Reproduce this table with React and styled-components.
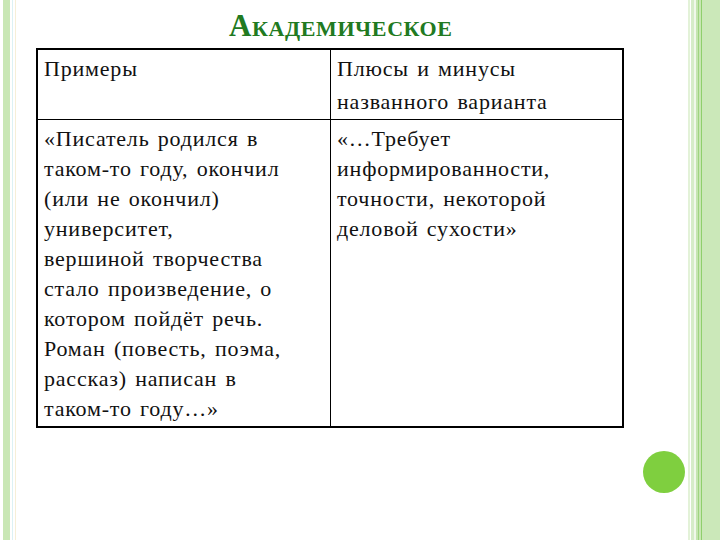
import React from "react";
import styled, { createGlobalStyle } from "styled-components";

const GlobalStyle = createGlobalStyle`
    html, body {
        margin: 0;
        padding: 0;
        background: #ffffff;
        font-family: "Times New Roman", "Liberation Serif", serif;
    }
`;

const Slide = styled.div`
    width: 720px;
    height: 540px;
    display: flex;
    background: #ffffff;
    overflow: hidden;
`;

const Border = styled.div`
    display: flex;
    height: 100%;
    flex-shrink: 0;
`;

const Stripe = styled.div`
    width: ${(p) => p.w}px;
    background: ${(p) => p.color};
`;

const Main = styled.div`
    flex: 1;
    display: flex;
    flex-direction: column;
`;

const Title = styled.h1`
    margin: 0;
    height: 48px;
    padding-left: 213px;
    box-sizing: border-box;
    display: flex;
    align-items: flex-end;
    padding-bottom: 7px;
    font-family: "Liberation Serif", "Times New Roman", serif;
    font-weight: bold;
    font-size: 31px;
    font-variant: small-caps;
    letter-spacing: 0.6px;
    line-height: 1;
    color: #217a21;
`;

const Grid = styled.div`
    margin-left: 20px;
    width: 588px;
    box-sizing: border-box;
    display: grid;
    grid-template-columns: 293px 1fr;
    border: 2px solid #000;
`;

const Cell = styled.div`
    border-right: ${(p) => (p.last ? "none" : "1px solid #000")};
    border-bottom: ${(p) => (p.head ? "1px solid #000" : "none")};
    padding: ${(p) => (p.head ? "2px 6px 1px 6px" : "4px 6px 2px 6px")};
`;

const Line = styled.div`
    font-family: "Times New Roman", "Liberation Serif", serif;
    font-size: 22px;
    color: #111;
    line-height: ${(p) => p.lh || 30}px;
    white-space: nowrap;
    letter-spacing: 0.8px;
    word-spacing: 2px;
`;

const Footer = styled.div`
    display: flex;
    justify-content: flex-end;
    padding: 23px 3px 0 0;
`;

const Dot = styled.div`
    width: 42px;
    height: 42px;
    border-radius: 50%;
    background: #7fcf3f;
`;

const leftStripes = [
    [3, "#ffffff"],
    [7, "#c9e7b5"],
    [2, "#ffffff"],
    [1, "#dcf1f4"],
    [2, "#ffffff"],
    [1, "#f6efd8"],
];

const rightStripes = [
    [2, "#e3f2d8"],
    [1, "#ffffff"],
    [3, "#d6ecc8"],
    [2, "#f0f8ea"],
    [2, "#c5e5b0"],
    [1, "#9fd480"],
    [2, "#c8e6b4"],
    [1, "#8fcf6c"],
    [18, "#cbe8b9"],
];

const examples = [
    "«Писатель родился в",
    "таком-то году, окончил",
    "(или не окончил)",
    "университет,",
    "вершиной творчества",
    "стало произведение, о",
    "котором пойдёт речь.",
    "Роман (повесть, поэма,",
    "рассказ) написан в",
    "таком-то году…»",
];

const verdict = [
    "«…Требует",
    "информированности,",
    "точности, некоторой",
    "деловой сухости»",
];

const App = () => {
    return (
        <>
            <GlobalStyle />
            <Slide>
                <Border>
                    {leftStripes.map(([w, c], i) => (
                        <Stripe key={i} w={w} color={c} />
                    ))}
                </Border>
                <Main>
                    <Title>Академическое</Title>
                    <Grid>
                        <Cell head>
                            <Line lh={33}>Примеры</Line>
                        </Cell>
                        <Cell head last>
                            <Line lh={33}>Плюсы и минусы</Line>
                            <Line lh={33}>названного варианта</Line>
                        </Cell>
                        <Cell>
                            {examples.map((t) => (
                                <Line key={t}>{t}</Line>
                            ))}
                        </Cell>
                        <Cell last>
                            {verdict.map((t) => (
                                <Line key={t}>{t}</Line>
                            ))}
                        </Cell>
                    </Grid>
                    <Footer>
                        <Dot />
                    </Footer>
                </Main>
                <Border>
                    {rightStripes.map(([w, c], i) => (
                        <Stripe key={i} w={w} color={c} />
                    ))}
                </Border>
            </Slide>
        </>
    );
};

export default App;
